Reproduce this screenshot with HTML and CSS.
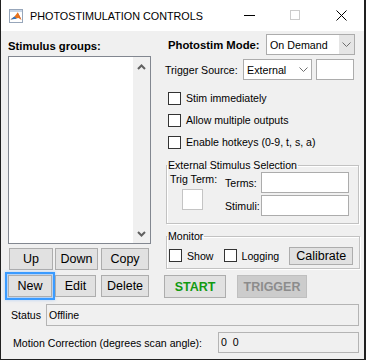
FILE: index.html
```html
<!DOCTYPE html>
<html lang="en">
<head>
    <meta charset="UTF-8">
    <meta name="viewport" content="width=device-width, initial-scale=1.0">
    <title>Photostimulation Controls</title>
    <link rel="stylesheet" href="styles.css">
</head>
<body>
    <div class="window">
        <div class="titlebar">
            <svg class="appIcon" width="14" height="14" viewBox="0 0 14 14">
                <rect x="0.5" y="0.5" width="13" height="13" fill="#fff" stroke="#97a6ba"/>
                <rect x="1" y="1" width="12" height="2" fill="#c9d6e8"/>
                <path d="M1.5 10.5 L5.5 7.5 L8.8 3.2 L12.5 11 L9.5 9 Z" fill="#e8731e"/>
                <path d="M8.8 3.2 L12.5 11 L10.6 8 Z" fill="#b8401a"/>
                <path d="M1.5 10.5 L5.5 7.5 L7.8 9.8 Z" fill="#2f74c4"/>
            </svg>
            <span class="title">PHOTOSTIMULATION CONTROLS</span>
            <div class="caption">
                <span class="capBtn">
                    <svg width="11" height="11" viewBox="0 0 11 11"><path d="M0 5.5 H11" stroke="#000" stroke-width="1"/></svg>
                </span>
                <span class="capBtn">
                    <svg width="11" height="11" viewBox="0 0 11 11"><rect x="0.5" y="0.5" width="9" height="9" fill="none" stroke="#cccccc"/></svg>
                </span>
                <span class="capBtn">
                    <svg width="11" height="11" viewBox="0 0 11 11"><path d="M0.5 0.5 L10.5 10.5 M10.5 0.5 L0.5 10.5" stroke="#000" stroke-width="1"/></svg>
                </span>
            </div>
        </div>

        <div class="content">
            <div class="main">
                <div class="leftCol">
                    <div class="boldLabel groupsLabel">Stimulus groups:</div>
                    <div class="listbox">
                        <div class="listItems"></div>
                        <div class="vscroll">
                            <svg width="9" height="6" viewBox="0 0 9 6"><path d="M1 5 L4.5 1.5 L8 5" stroke="#606060" stroke-width="2" fill="none"/></svg>
                            <svg width="9" height="6" viewBox="0 0 9 6"><path d="M1 1 L4.5 4.5 L8 1" stroke="#606060" stroke-width="2" fill="none"/></svg>
                        </div>
                    </div>
                    <div class="btnRow rowOne">
                        <button class="btn btnUp">Up</button>
                        <button class="btn btnDown">Down</button>
                        <button class="btn btnCopy">Copy</button>
                    </div>
                    <div class="btnRow rowTwo">
                        <button class="btn btnNew">New</button>
                        <button class="btn btnEdit">Edit</button>
                        <button class="btn btnDelete">Delete</button>
                    </div>
                </div>

                <div class="rightCol">
                    <div class="modeRow">
                        <span class="boldLabel modeLabel">Photostim Mode:</span>
                        <div class="select selMode">
                            <span class="selValue">On Demand</span>
                            <span class="selDrop grey">
                                <svg width="9" height="5" viewBox="0 0 9 5"><path d="M0.5 0.5 L4.5 4.5 L8.5 0.5" stroke="#6d6d6d" fill="none"/></svg>
                            </span>
                        </div>
                    </div>
                    <div class="trigRow">
                        <span class="trigLabel">Trigger Source:</span>
                        <div class="select selTrig">
                            <span class="selValue">External</span>
                            <span class="selDrop">
                                <svg width="9" height="5" viewBox="0 0 9 5"><path d="M0.5 0.5 L4.5 4.5 L8.5 0.5" stroke="#6d6d6d" fill="none"/></svg>
                            </span>
                        </div>
                        <div class="field trigField"></div>
                    </div>

                    <div class="checks">
                        <div class="checkRow"><span class="cb"></span><span>Stim immediately</span></div>
                        <div class="checkRow"><span class="cb"></span><span>Allow multiple outputs</span></div>
                        <div class="checkRow"><span class="cb"></span><span>Enable hotkeys (0-9, t, s, a)</span></div>
                    </div>

                    <fieldset class="frame essFrame">
                        <legend>External Stimulus Selection</legend>
                        <div class="essBody">
                            <div class="trigTerm">
                                <div class="termLabel">Trig Term:</div>
                                <div class="termBox"></div>
                            </div>
                            <div class="essFields">
                                <div class="essRow"><span class="essLabel">Terms:</span><div class="field essField"></div></div>
                                <div class="essRow"><span class="essLabel">Stimuli:</span><div class="field essField"></div></div>
                            </div>
                        </div>
                    </fieldset>

                    <fieldset class="frame monFrame">
                        <legend>Monitor</legend>
                        <div class="monBody">
                            <span class="cb"></span><span class="monText showText">Show</span>
                            <span class="cb"></span><span class="monText">Logging</span>
                            <button class="btn btnCal">Calibrate</button>
                        </div>
                    </fieldset>

                    <div class="runRow">
                        <button class="btn btnStart">START</button>
                        <button class="btn btnTrigger">TRIGGER</button>
                    </div>
                </div>
            </div>

            <div class="statusRow">
                <span class="statusLabel">Status</span>
                <div class="field statusField">Offline</div>
            </div>
            <div class="motionRow">
                <span class="motionLabel">Motion Correction (degrees scan angle):</span>
                <div class="field motionField">0&nbsp;&nbsp;0</div>
            </div>
        </div>
    </div>
</body>
</html>
```

FILE: styles.css
```css
body{
    margin: 0;
    background-color: #202020;
    font-family: "Liberation Sans", Arial, sans-serif;
    font-size: 10.6px;
    color: #000;
}
.window{
    margin-left: 1px;
    width: 363px;
    height: 359px;
    background-color: #f0f0f0;
    display: flex;
    flex-direction: column;
}

/* title bar */
.titlebar{
    height: 31px;
    flex-shrink: 0;
    background-color: #fff;
    display: flex;
    align-items: center;
}
.appIcon{
    margin-left: 8px;
}
.title{
    margin-left: 7px;
    font-size: 10.8px;
}
.caption{
    margin-left: auto;
    display: flex;
    height: 31px;
}
.capBtn{
    width: 46px;
    display: flex;
    align-items: center;
    justify-content: center;
}

/* body */
.content{
    flex: 1;
    display: flex;
    flex-direction: column;
}
.main{
    display: flex;
}
.leftCol{
    width: 143px;
    margin-left: 7px;
    padding-top: 8px;
}
.rightCol{
    width: 196px;
    margin-left: 12px;
    padding-top: 3px;
}
.boldLabel{
    font-weight: bold;
    font-size: 11.3px;
    line-height: 14px;
}

.listbox{
    margin-top: 3px;
    height: 188px;
    box-sizing: border-box;
    border: 1px solid #828790;
    background-color: #fff;
    display: flex;
}
.listItems{
    flex: 1;
}
.vscroll{
    width: 17px;
    background-color: #f0f0f0;
    display: flex;
    flex-direction: column;
    justify-content: space-between;
    align-items: center;
    padding: 7px 0 6px;
}

.btn{
    height: 22px;
    box-sizing: border-box;
    border: 1px solid #adadad;
    background-color: #e1e1e1;
    font-family: "Liberation Sans", Arial, sans-serif;
    font-size: 12.5px;
    color: #000;
    padding: 0;
}
.btnRow{
    display: flex;
}
.rowOne{
    margin-top: 4px;
}
.rowTwo{
    margin-top: 5px;
}
.btnUp{ width: 44px; margin-left: 1px; }
.btnDown{ width: 43px; margin-left: 2px; }
.btnCopy{ width: 48px; margin-left: 3px; }
.btnNew{
    width: 44px;
    outline: 2px solid #3a9bff;
    outline-offset: 1px;
    box-shadow: 0 0 3px 3px rgba(60, 150, 255, 0.35);
}
.btnEdit{ width: 41px; margin-left: 3px; }
.btnDelete{ width: 48px; margin-left: 5px; }

/* right column */
.modeRow{
    display: flex;
    align-items: center;
    height: 21px;
}
.modeLabel{
    margin-left: 5px;
    width: 98px;
}
.select{
    height: 21px;
    box-sizing: border-box;
    border: 1px solid #acacac;
    background-color: #fff;
    display: flex;
    align-items: center;
}
.selValue{
    flex: 1;
    padding-left: 3px;
    font-size: 10.7px;
}
.selDrop{
    width: 15px;
    height: 100%;
    display: flex;
    align-items: center;
    justify-content: center;
}
.selDrop.grey{
    background-color: #e5e5e5;
}
.selMode{
    width: 89px;
}
.trigRow{
    margin-top: 4px;
    display: flex;
    align-items: center;
    height: 21px;
}
.trigLabel{
    margin-left: 2px;
    width: 78px;
}
.selTrig{
    width: 69px;
}
.field{
    height: 21px;
    box-sizing: border-box;
    border: 1px solid #acacac;
    background-color: #fff;
}
.trigField{
    width: 38px;
    margin-left: 4px;
}

.checks{
    margin-top: 7px;
}
.checkRow{
    height: 22px;
    display: flex;
    align-items: center;
    padding-left: 5px;
}
.cb{
    width: 13px;
    height: 13px;
    box-sizing: border-box;
    border: 1px solid #333;
    background-color: #fff;
    margin-right: 5px;
    flex-shrink: 0;
}

.frame{
    margin: 0 0 0 3px;
    padding: 0;
    width: 193px;
    box-sizing: border-box;
    border: 1px solid #c2c2c2;
    box-shadow: inset 1px 1px 0 #fff, 1px 1px 0 #fff;
}
.frame legend{
    padding: 0 1px;
    margin-left: 0;
    line-height: 12px;
    font-size: 10.6px;
}
.essFrame{
    margin-top: 6px;
    height: 65px;
}
.essBody{
    display: flex;
}
.trigTerm{
    width: 58px;
    padding-top: 2px;
}
.termLabel{
    padding-left: 3px;
    line-height: 12px;
}
.termBox{
    margin: 4px 0 0 15px;
    width: 21px;
    height: 21px;
    box-sizing: border-box;
    border: 1px solid #c4c4c4;
    background-color: #fff;
}
.essFields{
    padding-top: 1px;
}
.essRow{
    display: flex;
    align-items: center;
    margin-bottom: 2px;
}
.essLabel{
    width: 36px;
}
.essField{
    width: 88px;
}

.monFrame{
    margin-top: 6px;
    height: 39px;
}
.monBody{
    display: flex;
    align-items: center;
    height: 17px;
    margin-top: 5px;
    padding-left: 2px;
}
.monText{
    margin-right: 10px;
}
.showText{
    margin-right: 10px;
}
.btnCal{
    height: 18px;
    width: 64px;
    margin-left: auto;
    margin-right: 6px;
}

.runRow{
    margin-top: 6px;
    display: flex;
}
.btnStart{
    width: 62px;
    height: 23px;
    margin-left: 1px;
    font-weight: bold;
    color: #119a11;
}
.btnTrigger{
    width: 70px;
    height: 23px;
    margin-left: 11px;
    font-weight: bold;
    background-color: #cccccc;
    border-color: #bfbfbf;
    color: #8c8c8c;
}

/* bottom rows */
.statusRow{
    margin-top: 6px;
    display: flex;
    align-items: center;
}
.statusLabel{
    margin-left: 10px;
    width: 35px;
}
.statusField{
    width: 313px;
    height: 22px;
    background-color: #f0f0f0;
    border-color: #b4b4b4;
    line-height: 20px;
    padding-left: 2px;
    font-size: 10.5px;
}
.motionRow{
    margin-top: 6px;
    display: flex;
    align-items: center;
}
.motionLabel{
    margin-left: 12px;
    width: 205px;
}
.motionField{
    width: 141px;
    background-color: #f0f0f0;
    border-color: #b4b4b4;
    line-height: 19px;
    padding-left: 2px;
}
```
